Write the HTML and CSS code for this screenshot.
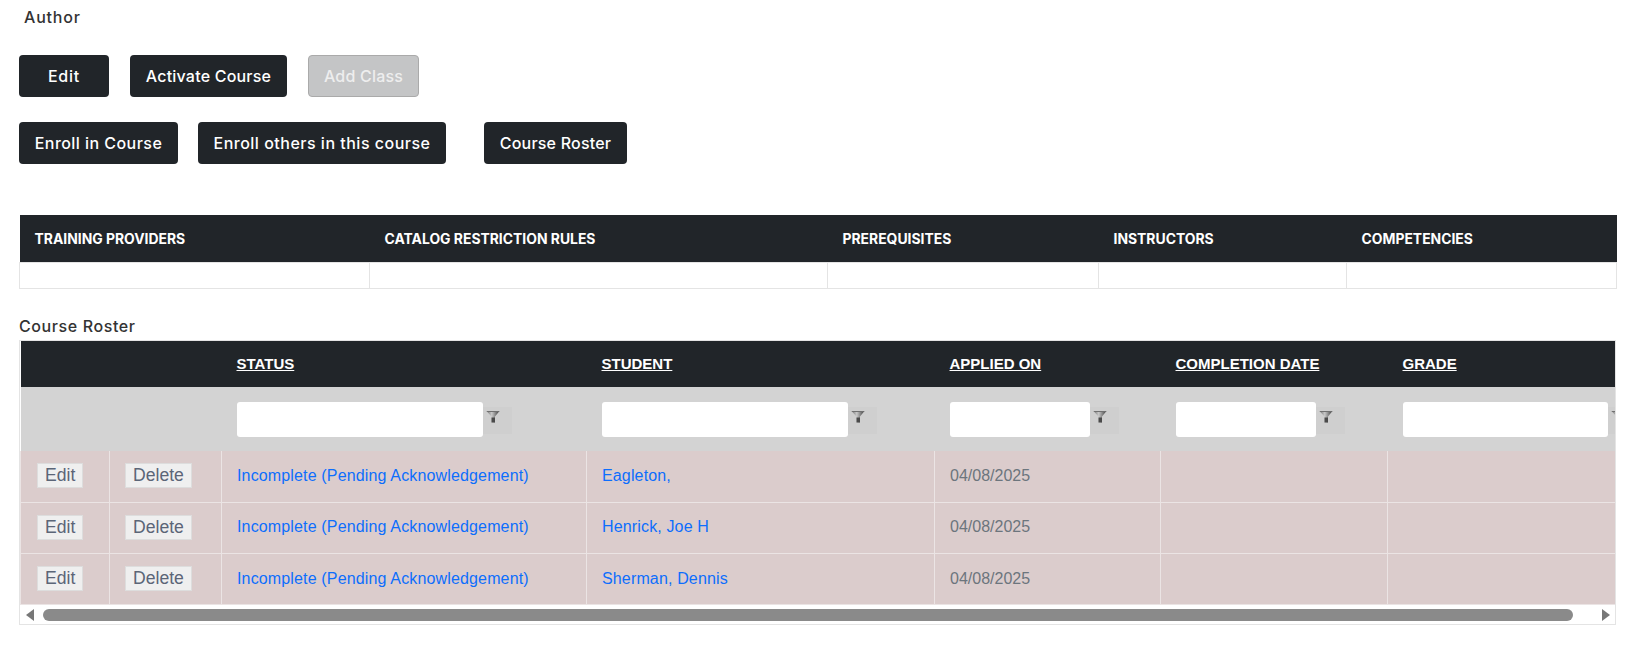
FILE: index.html
```html
<!DOCTYPE html>
<html lang="en">
<head>
    <meta charset="UTF-8">
    <title>Course Details</title>
    <link rel="stylesheet" href="styles.css">
</head>
<body>

<svg class="icon-defs" width="0" height="0">
    <defs>
        <linearGradient id="funnelFill" x1="0" x2="1" y1="0" y2="0">
            <stop offset="0" stop-color="#6e6e6e"/>
            <stop offset="0.4" stop-color="#c8c8c8"/>
            <stop offset="1" stop-color="#3c3c3c"/>
        </linearGradient>
        <symbol id="funnel" viewBox="0 0 14 13">
            <path d="M0.500 1h13L9 6.500V12.500H5.500V6.500z" fill="url(#funnelFill)"/>
            <path d="M0.500 1h13l-1 1H1.500z" fill="#707070"/>
            <path d="M5.500 7.500H9V12.500H5.500z" fill="#4a4a4a"/>
        </symbol>
    </defs>
</svg>

<div class="page">
    <div class="author">Author</div>

    <!-- Course actions -->
    <div class="btn-row first">
        <a class="btn edit-btn">Edit</a>
        <a class="btn activate-btn">Activate Course</a>
        <a class="btn add-btn disabled">Add Class</a>
    </div>
    <div class="btn-row second">
        <a class="btn enroll-btn">Enroll in Course</a>
        <a class="btn enroll-others-btn">Enroll others in this course</a>
        <a class="btn roster-btn">Course Roster</a>
    </div>

    <table class="info-table">
        <colgroup>
            <col class="col-providers"><col class="col-rules"><col class="col-prereq"><col class="col-instructors"><col class="col-competencies">
        </colgroup>
        <thead>
            <tr>
                <th>Training Providers</th>
                <th>Catalog Restriction Rules</th>
                <th>Prerequisites</th>
                <th>Instructors</th>
                <th>Competencies</th>
            </tr>
        </thead>
        <tbody>
            <tr><td></td><td></td><td></td><td></td><td></td></tr>
        </tbody>
    </table>

    <div class="roster-title">Course Roster</div>

    <!-- Roster grid -->
    <div class="roster-box">
        <div class="roster-clip">
            <table class="roster-table">
                <colgroup>
                    <col class="col-edit"><col class="col-delete"><col class="col-status"><col class="col-student"><col class="col-applied"><col class="col-completion"><col class="col-grade">
                </colgroup>
                <thead>
                    <tr class="head-row">
                        <th></th>
                        <th></th>
                        <th><a>Status</a></th>
                        <th><a>Student</a></th>
                        <th><a>Applied On</a></th>
                        <th><a>Completion Date</a></th>
                        <th><a>Grade</a></th>
                    </tr>
                    <tr class="filter-row">
                        <td></td>
                        <td></td>
                        <td><div class="filter"><input type="text" class="wide"><span class="filter-btn"><svg width="14" height="13"><use href="#funnel"/></svg></span></div></td>
                        <td><div class="filter"><input type="text" class="wide"><span class="filter-btn"><svg width="14" height="13"><use href="#funnel"/></svg></span></div></td>
                        <td><div class="filter"><input type="text" class="narrow"><span class="filter-btn"><svg width="14" height="13"><use href="#funnel"/></svg></span></div></td>
                        <td><div class="filter"><input type="text" class="narrow"><span class="filter-btn"><svg width="14" height="13"><use href="#funnel"/></svg></span></div></td>
                        <td><div class="filter"><input type="text" class="wide-last"><span class="filter-btn"><svg width="14" height="13"><use href="#funnel"/></svg></span></div></td>
                    </tr>
                </thead>
                <tbody>
                    <tr>
                        <td><button class="row-btn">Edit</button></td>
                        <td class="delete-cell"><button class="row-btn">Delete</button></td>
                        <td><a class="link">Incomplete (Pending Acknowledgement)</a></td>
                        <td><a class="link">Eagleton,</a></td>
                        <td>04/08/2025</td>
                        <td></td>
                        <td></td>
                    </tr>
                    <tr>
                        <td><button class="row-btn">Edit</button></td>
                        <td class="delete-cell"><button class="row-btn">Delete</button></td>
                        <td><a class="link">Incomplete (Pending Acknowledgement)</a></td>
                        <td><a class="link">Henrick, Joe H</a></td>
                        <td>04/08/2025</td>
                        <td></td>
                        <td></td>
                    </tr>
                    <tr>
                        <td><button class="row-btn">Edit</button></td>
                        <td class="delete-cell"><button class="row-btn">Delete</button></td>
                        <td><a class="link">Incomplete (Pending Acknowledgement)</a></td>
                        <td><a class="link">Sherman, Dennis</a></td>
                        <td>04/08/2025</td>
                        <td></td>
                        <td></td>
                    </tr>
                </tbody>
            </table>
        </div>
        <div class="scrollbar">
            <span class="arrow-left"></span>
            <div class="thumb"></div>
            <span class="arrow-right"></span>
        </div>
    </div>
</div>

</body>
</html>
```

FILE: styles.css
```css
body {
    margin: 0;
    font-family: "Inter", "Liberation Sans", sans-serif;
    background-color: white;
    color: #333;
}
.icon-defs {
    display: block;
    height: 0;
}
.page {
    padding: 0 22px 0 19px;
}
.author {
    font-size: 16px;
    font-weight: 500;
    line-height: 22px;
    letter-spacing: 0.8px;
    padding: 6px 0 0 5px;
    color: #333;
}
.btn-row {
    display: flex;
    gap: 20px;
}
.btn-row.first {
    margin-top: 27px;
    gap: 21px;
}
.btn-row.second {
    margin-top: 25px;
}
.btn {
    height: 42px;
    line-height: 42px;
    text-align: center;
    background-color: #212529;
    color: white;
    border-radius: 4px;
    font-size: 16px;
    font-weight: 500;
    letter-spacing: 0.2px;
    white-space: nowrap;
    box-sizing: border-box;
}
.edit-btn { width: 90px; letter-spacing: 0.8px; }
.activate-btn { width: 157px; }
.add-btn { width: 111px; }
.enroll-btn { width: 159px; letter-spacing: 0.45px; }
.enroll-others-btn { width: 248px; letter-spacing: 0.5px; }
.roster-btn { width: 143px; margin-left: 18px; }
.btn.disabled {
    background-color: #c4c5c6;
    border: 1px solid #aaa;
    line-height: 40px;
    color: #eee;
}
.info-table {
    margin-top: 51px;
    border-collapse: collapse;
    table-layout: fixed;
    width: 1597px;
}
.col-providers { width: 350px; }
.col-rules { width: 458px; }
.col-prereq { width: 271px; }
.col-instructors { width: 248px; }
.col-competencies { width: 270px; }
.info-table th {
    background-color: #212529;
    color: white;
    font-size: 13.900px;
    font-weight: 700;
    text-transform: uppercase;
    text-align: left;
    height: 47px;
    padding: 0 0 0 15px;
}
.info-table td {
    height: 26px;
    padding: 0;
    border: 1px solid #e4e4e4;
    background-color: white;
    box-sizing: border-box;
}
.roster-title {
    font-size: 16px;
    font-weight: 500;
    line-height: 22px;
    letter-spacing: 0.6px;
    margin-top: 26px;
}
.roster-box {
    margin-top: 3px;
    border: 1px solid #e4e4e4;
    height: 285px;
    box-sizing: border-box;
}
.roster-clip {
    overflow: hidden;
}
.roster-table {
    border-collapse: collapse;
    table-layout: fixed;
    width: 1618px;
    font-family: "Liberation Sans", Arial, sans-serif;
    font-size: 16px;
}
.col-edit { width: 89px; }
.col-delete { width: 112px; }
.col-status { width: 365px; }
.col-student { width: 348px; }
.col-applied { width: 226px; }
.col-completion { width: 227px; }
.col-grade { width: 251px; }
.head-row th {
    background-color: #212529;
    height: 46px;
    padding: 0 0 1px 15px;
    text-align: left;
    font-size: 15px;
    font-weight: 700;
    color: white;
    text-transform: uppercase;
    box-sizing: border-box;
}
.head-row a {
    text-decoration: underline;
}
.filter-row td {
    background-color: #d3d3d3;
    height: 64px;
    padding: 0 0 0 15px;
}
.filter {
    display: flex;
    align-items: center;
    white-space: nowrap;
}
.filter input {
    height: 35px;
    padding: 0;
    border: none;
    border-radius: 3px;
    background-color: white;
    box-sizing: border-box;
}
.wide { width: 246px; }
.narrow { width: 140px; }
.wide-last { width: 205px; }
.filter-btn {
    display: flex;
    flex-shrink: 0;
    width: 29px;
    height: 27px;
    margin-top: 2px;
    padding: 3px 0 0 3px;
    background-color: #cfcfcf;
    box-sizing: border-box;
}
.roster-table tbody td {
    background-color: #dbcccc;
    border: 1px solid #ebe4e4;
    border-top: none;
    height: 51.300px;
    padding: 0 0 1px 15px;
    color: #6c757d;
    box-sizing: border-box;
}
.roster-table tbody td:first-child {
    padding-left: 16px;
}
.row-btn {
    height: 25px;
    padding: 0 7px;
    font-family: "Liberation Sans", Arial, sans-serif;
    font-size: 17.600px;
    line-height: 23px;
    color: #5b6577;
    background-color: #efefef;
    border: 1px solid #ddd;
}
.link {
    color: #0d6efd;
    letter-spacing: 0.15px;
}
.scrollbar {
    position: relative;
    height: 19px;
    margin-top: 1px;
}
.thumb {
    position: absolute;
    left: 23px;
    top: 3px;
    width: 1530px;
    height: 12px;
    background-color: #8a8a8a;
    border-radius: 6px;
}
.arrow-left {
    position: absolute;
    left: 6px;
    top: 3px;
    border-top: 6px solid transparent;
    border-bottom: 6px solid transparent;
    border-right: 8px solid #777;
}
.arrow-right {
    position: absolute;
    right: 5px;
    top: 3px;
    border-top: 6px solid transparent;
    border-bottom: 6px solid transparent;
    border-left: 8px solid #777;
}
```
